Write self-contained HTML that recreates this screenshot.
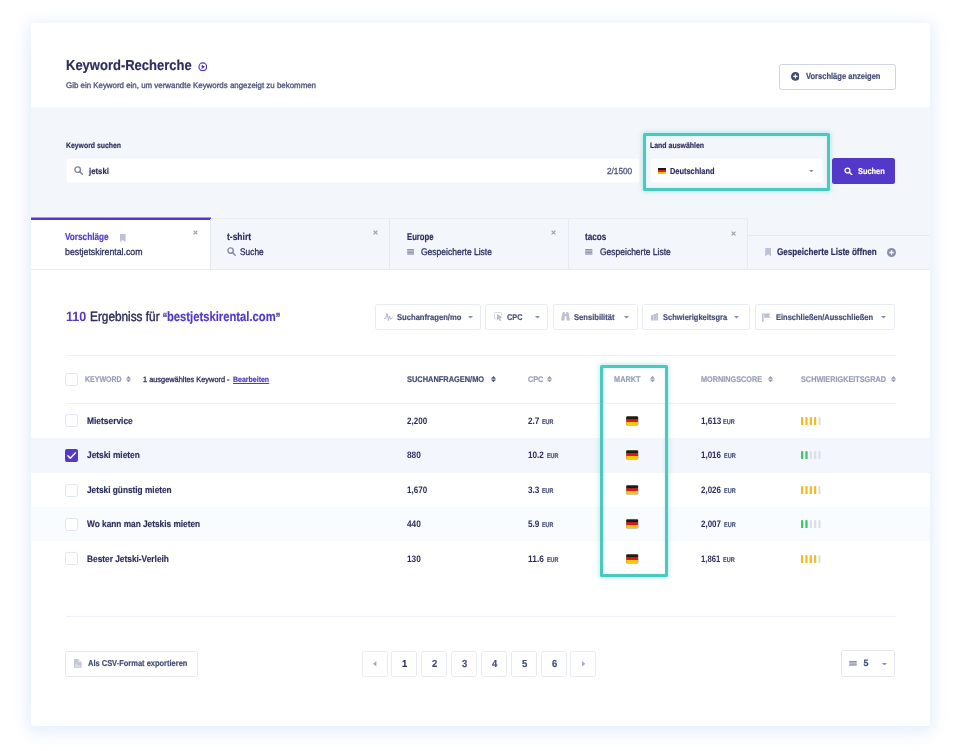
<!DOCTYPE html>
<html lang="de"><head><meta charset="utf-8"><title>Keyword-Recherche</title>
<style>
html,body{margin:0;padding:0;background:#fff;}
body{width:960px;height:751px;position:relative;overflow:hidden;font-family:"Liberation Sans",Arial,sans-serif;}
.b{position:absolute;display:block;}
.t{position:absolute;display:block;white-space:nowrap;transform-origin:0 50%;text-rendering:geometricPrecision;}
#w{position:absolute;left:0;top:0;width:960px;height:751px;will-change:transform;}
</style></head><body><div id="w">
<div class="b" style="left:31px;top:23px;width:899px;height:703px;background:#fff;border-radius:3px;box-shadow:0 2px 9px 5px rgba(185,212,252,.17), 0 5px 22px 1px rgba(185,212,252,.24);"></div>
<div class="b" style="left:31px;top:107px;width:899px;height:162.5px;background:#f3f6fb;"></div>
<div class="b" style="left:31px;top:218px;width:717px;height:1px;background:#e9edf6;"></div>
<div class="b" style="left:31px;top:269px;width:899px;height:1px;background:#e6eaf4;"></div>
<div class="b" style="left:31px;top:220px;width:179.5px;height:49px;background:#fff;"></div>
<div class="b" style="left:31px;top:218px;width:180px;height:2px;background:#5338c9;"></div>
<div class="b" style="left:31px;top:217px;width:180px;height:1px;background:#5338c9;opacity:.5;"></div>
<div class="b" style="left:210.0px;top:219px;width:1px;height:50px;background:#e6eaf4;"></div>
<div class="b" style="left:389.0px;top:219px;width:1px;height:50px;background:#e6eaf4;"></div>
<div class="b" style="left:568.0px;top:219px;width:1px;height:50px;background:#e6eaf4;"></div>
<div class="b" style="left:747.0px;top:219px;width:1px;height:50px;background:#e6eaf4;"></div>
<div class="b" style="left:747.5px;top:234.5px;width:182.5px;height:1px;background:#e6eaf4;"></div>
<span class="t" style="left:65.50px;top:59.00px;font-size:14.5px;line-height:14.5px;color:#2b2e5c;font-weight:700;-webkit-text-stroke:0.18px #2b2e5c;transform:scaleX(0.8965);">Keyword-Recherche</span>
<svg class="b" style="left:197.8px;top:61.6px" width="9.6" height="9.6" viewBox="0 0 24 24"><circle cx="12" cy="12" r="9.6" fill="none" stroke="#5338c9" stroke-width="3"/><path d="M9.2 6.6 L17.6 12 L9.2 17.4Z" fill="#4a2fc4"/></svg>
<span class="t" style="left:65.60px;top:82.00px;font-size:8.2px;line-height:8.2px;color:#4a5079;-webkit-text-stroke:0.3px #4a5079;transform:scaleX(0.9655);">Gib ein Keyword ein, um verwandte Keywords angezeigt zu bekommen</span>
<div class="b" style="left:779px;top:64px;width:116.5px;height:25.5px;border:1px solid #cfd4e3;border-radius:2.5px;box-sizing:border-box;background:#fff;"></div>
<svg class="b" style="left:790.6px;top:72.4px" width="8.8" height="8.8" viewBox="0 0 24 24"><circle cx="12" cy="12" r="12" fill="#3f4a70"/><path d="M12 6v12M6 12h12" stroke="#fff" stroke-width="3.4"/></svg>
<span class="t" style="left:805.80px;top:72.00px;font-size:8.8px;line-height:8.8px;color:#424c73;font-weight:700;-webkit-text-stroke:0.18px #424c73;transform:scaleX(0.8574);">Vorschläge anzeigen</span>
<span class="t" style="left:65.70px;top:142.00px;font-size:8px;line-height:8px;color:#2b2e5c;font-weight:700;-webkit-text-stroke:0.18px #2b2e5c;transform:scaleX(0.8599);">Keyword suchen</span>
<div class="b" style="left:66px;top:158px;width:574px;height:25px;background:#fff;border:1px solid #f6f8fc;border-radius:2.5px;box-sizing:border-box;"></div>
<svg class="b" style="left:74.4px;top:166px" width="9.1" height="9.1" viewBox="0 0 24 24"><circle cx="9.6" cy="9.6" r="7.3" fill="none" stroke="#7d849f" stroke-width="3.6"/><path d="M15.2 15.2 L22 22" stroke="#7d849f" stroke-width="4" stroke-linecap="round"/></svg>
<span class="t" style="left:89.10px;top:167.00px;font-size:8.6px;line-height:8.6px;color:#2b2e5c;font-weight:700;-webkit-text-stroke:0.18px #2b2e5c;transform:scaleX(0.9049);">jetski</span>
<span class="t" style="left:606.80px;top:167.00px;font-size:8.7px;line-height:8.7px;color:#4a5579;-webkit-text-stroke:0.3px #4a5579;transform:scaleX(0.9470);">2/1500</span>
<div class="b" style="left:643px;top:133px;width:187px;height:58px;border:3px solid #4ac9bf;border-radius:1.5px;box-sizing:border-box;box-shadow:0 0 4px 1px rgba(74,201,191,.35), inset 0 0 3px rgba(74,201,191,.25);"></div>
<span class="t" style="left:649.60px;top:142.00px;font-size:8px;line-height:8px;color:#2b2e5c;font-weight:700;-webkit-text-stroke:0.18px #2b2e5c;transform:scaleX(0.8693);">Land auswählen</span>
<div class="b" style="left:650px;top:158px;width:173px;height:25px;background:#fff;border:1px solid #f6f8fc;border-radius:2.5px;box-sizing:border-box;"></div>
<svg class="b" style="left:658px;top:168px" width="8" height="6" viewBox="0 0 9 6" preserveAspectRatio="none"><rect width="9" height="2" fill="#1a1a1a"/><rect y="2" width="9" height="2" fill="#dd1f26"/><rect y="4" width="9" height="2" fill="#f7c600"/></svg>
<span class="t" style="left:669.80px;top:167.00px;font-size:8.7px;line-height:8.7px;color:#2b2e5c;font-weight:700;-webkit-text-stroke:0.18px #2b2e5c;transform:scaleX(0.8523);">Deutschland</span>
<svg class="b" style="left:809.4px;top:170px" width="4.6" height="2.4" viewBox="0 0 10 5"><path d="M0 0h10L5 5z" fill="#8a90a8"/></svg>
<div class="b" style="left:832px;top:158px;width:63.3px;height:25.7px;background:#5338c9;border-radius:2.5px;"></div>
<svg class="b" style="left:844.4px;top:166.6px" width="8.8" height="8.8" viewBox="0 0 24 24"><circle cx="9.5" cy="9.5" r="6.6" fill="none" stroke="#fff" stroke-width="3.6"/><path d="M14.6 14.6 L22 22" stroke="#fff" stroke-width="3.8" stroke-linecap="round"/></svg>
<span class="t" style="left:857.50px;top:167.00px;font-size:8.5px;line-height:8.5px;color:#fff;font-weight:700;-webkit-text-stroke:0.18px #fff;transform:scaleX(0.8697);">Suchen</span>
<span class="t" style="left:65.30px;top:233.00px;font-size:9.9px;line-height:9.9px;color:#5338c9;font-weight:700;-webkit-text-stroke:0.18px #5338c9;transform:scaleX(0.8302);">Vorschläge</span>
<svg class="b" style="left:120px;top:233.7px" width="5.6" height="8" viewBox="0 0 10 14"><path d="M0 0h10v14l-5-3.6L0 14z" fill="#bcc1d3"/></svg>
<span class="t" style="left:65.40px;top:248.00px;font-size:9.6px;line-height:9.6px;color:#2b2e5c;-webkit-text-stroke:0.3px #2b2e5c;transform:scaleX(0.9147);">bestjetskirental.com</span>
<svg class="b" style="left:193px;top:230.3px" width="5" height="5" viewBox="0 0 10 10"><path d="M1.2 1.2l7.6 7.6M8.8 1.2l-7.6 7.6" stroke="#9fa2aa" stroke-width="2.5"/></svg>
<span class="t" style="left:227.40px;top:233.00px;font-size:9.9px;line-height:9.9px;color:#2b2e5c;font-weight:700;-webkit-text-stroke:0.18px #2b2e5c;transform:scaleX(0.8593);">t-shirt</span>
<svg class="b" style="left:227.2px;top:247px" width="8.9" height="8.9" viewBox="0 0 24 24"><circle cx="9.6" cy="9.6" r="7.3" fill="none" stroke="#8389a5" stroke-width="3.7"/><path d="M15.2 15.2 L22 22" stroke="#8389a5" stroke-width="4" stroke-linecap="round"/></svg>
<span class="t" style="left:240.30px;top:248.00px;font-size:9.6px;line-height:9.6px;color:#2b2e5c;-webkit-text-stroke:0.3px #2b2e5c;transform:scaleX(0.8707);">Suche</span>
<svg class="b" style="left:372.5px;top:230.3px" width="5" height="5" viewBox="0 0 10 10"><path d="M1.2 1.2l7.6 7.6M8.8 1.2l-7.6 7.6" stroke="#9fa2aa" stroke-width="2.5"/></svg>
<span class="t" style="left:406.60px;top:233.00px;font-size:9.9px;line-height:9.9px;color:#2b2e5c;font-weight:700;-webkit-text-stroke:0.18px #2b2e5c;transform:scaleX(0.7814);">Europe</span>
<svg class="b" style="left:406.5px;top:249.1px" width="7.5" height="5.6" viewBox="0 0 14 11"><rect width="14" height="11" fill="#8e94ad" opacity=".35"/><path d="M0 1h14M0 4h14M0 7h14M0 10h14" stroke="#8e94ad" stroke-width="1.9"/></svg>
<span class="t" style="left:420.50px;top:248.00px;font-size:9.6px;line-height:9.6px;color:#2b2e5c;-webkit-text-stroke:0.3px #2b2e5c;transform:scaleX(0.8870);">Gespeicherte Liste</span>
<svg class="b" style="left:551.3px;top:230.3px" width="5" height="5" viewBox="0 0 10 10"><path d="M1.2 1.2l7.6 7.6M8.8 1.2l-7.6 7.6" stroke="#9fa2aa" stroke-width="2.5"/></svg>
<span class="t" style="left:585.30px;top:233.00px;font-size:9.9px;line-height:9.9px;color:#2b2e5c;font-weight:700;-webkit-text-stroke:0.18px #2b2e5c;transform:scaleX(0.8275);">tacos</span>
<svg class="b" style="left:585.3px;top:249.1px" width="7.5" height="5.6" viewBox="0 0 14 11"><rect width="14" height="11" fill="#8e94ad" opacity=".35"/><path d="M0 1h14M0 4h14M0 7h14M0 10h14" stroke="#8e94ad" stroke-width="1.9"/></svg>
<span class="t" style="left:599.80px;top:248.00px;font-size:9.6px;line-height:9.6px;color:#2b2e5c;-webkit-text-stroke:0.3px #2b2e5c;transform:scaleX(0.8845);">Gespeicherte Liste</span>
<svg class="b" style="left:730.6px;top:230.8px" width="5" height="5" viewBox="0 0 10 10"><path d="M1.2 1.2l7.6 7.6M8.8 1.2l-7.6 7.6" stroke="#9fa2aa" stroke-width="2.5"/></svg>
<svg class="b" style="left:764.5px;top:247.5px" width="6.4" height="8.4" viewBox="0 0 10 14"><path d="M0 0h10v14l-5-3.6L0 14z" fill="#bcc1d3"/></svg>
<span class="t" style="left:776.80px;top:248.00px;font-size:9.8px;line-height:9.8px;color:#2b2e5c;font-weight:700;-webkit-text-stroke:0.18px #2b2e5c;transform:scaleX(0.8284);">Gespeicherte Liste öffnen</span>
<svg class="b" style="left:887.2px;top:247.5px" width="9" height="9" viewBox="0 0 24 24"><circle cx="12" cy="12" r="12" fill="#8a90a8"/><path d="M12 6v12M6 12h12" stroke="#f3f6fc" stroke-width="3.4"/></svg>
<span class="t" style="left:66.00px;top:310.00px;font-size:13.4px;line-height:13.4px;color:#5338c9;font-weight:700;transform:scaleX(0.9390);">110</span>
<span class="t" style="left:89.60px;top:310.00px;font-size:13.4px;line-height:13.4px;color:#2b2e5c;-webkit-text-stroke:0.42px #2b2e5c;transform:scaleX(0.8822);">Ergebniss für</span>
<span class="t" style="left:162.60px;top:311.00px;font-size:17.5px;line-height:17.5px;color:#2b2e5c;-webkit-text-stroke:0.3px #2b2e5c;transform:scaleX(0.6864);">“</span>
<span class="t" style="left:166.80px;top:310.00px;font-size:13.4px;line-height:13.4px;color:#5338c9;font-weight:700;-webkit-text-stroke:0.18px #5338c9;transform:scaleX(0.8388);">bestjetskirental.com</span>
<span class="t" style="left:276.20px;top:311.00px;font-size:17.5px;line-height:17.5px;color:#2b2e5c;-webkit-text-stroke:0.3px #2b2e5c;transform:scaleX(0.6864);">”</span>
<div class="b" style="left:375px;top:304px;width:106px;height:26px;border:1px solid #e8ebf4;border-radius:2.5px;box-sizing:border-box;background:#fff;"></div>
<div class="b" style="left:485px;top:304px;width:63px;height:26px;border:1px solid #e8ebf4;border-radius:2.5px;box-sizing:border-box;background:#fff;"></div>
<div class="b" style="left:553px;top:304px;width:85px;height:26px;border:1px solid #e8ebf4;border-radius:2.5px;box-sizing:border-box;background:#fff;"></div>
<div class="b" style="left:642px;top:304px;width:108px;height:26px;border:1px solid #e8ebf4;border-radius:2.5px;box-sizing:border-box;background:#fff;"></div>
<div class="b" style="left:755px;top:304px;width:140px;height:26px;border:1px solid #e8ebf4;border-radius:2.5px;box-sizing:border-box;background:#fff;"></div>
<svg class="b" style="left:383.9px;top:313px" width="9" height="8" viewBox="0 0 9 8"><path d="M0 5.4L1.8 5.3L3.1 .4L4.4 7.4L5.6 3.1L6.7 6.3L8.9 4.4" fill="none" stroke="#adb2c8" stroke-width=".95" stroke-linejoin="round"/></svg>
<span class="t" style="left:396.70px;top:313.00px;font-size:8.4px;line-height:8.4px;color:#434c75;font-weight:700;-webkit-text-stroke:0.18px #434c75;transform:scaleX(0.9099);">Suchanfragen/mo</span>
<svg class="b" style="left:467.6px;top:316px" width="5" height="2.6" viewBox="0 0 10 5"><path d="M0 0h10L5 5z" fill="#8a90a8"/></svg>
<svg class="b" style="left:493.9px;top:312px" width="9" height="9.4" viewBox="0 0 9 9.4"><path d="M2.6 6.9H1.4Q.5 6.9 .5 6V1.4Q.5 .5 1.4 .5H6.7Q7.6 .5 7.6 1.4V3.3" fill="none" stroke="#d0d4e2" stroke-width=".95"/><path d="M3 2L8.4 5.3L6.2 6.1L7.3 8.6L5.9 9.1L4.8 6.8L3 8.2Z" fill="#b6bace"/></svg>
<span class="t" style="left:506.80px;top:313.00px;font-size:8.4px;line-height:8.4px;color:#434c75;font-weight:700;-webkit-text-stroke:0.18px #434c75;transform:scaleX(0.8740);">CPC</span>
<svg class="b" style="left:534.8px;top:316px" width="5" height="2.6" viewBox="0 0 10 5"><path d="M0 0h10L5 5z" fill="#8a90a8"/></svg>
<svg class="b" style="left:561.3px;top:312.4px" width="9" height="8.6" viewBox="0 0 9 8.6"><path d="M1.9 0H3.7L3.8 2.1H5.2L5.3 0H7.1L7.9 2.5L9 8.6H5.5V4.2H3.6V8.6H0L1.1 2.5Z" fill="#bcc0d2"/></svg>
<span class="t" style="left:573.80px;top:313.00px;font-size:8.4px;line-height:8.4px;color:#434c75;font-weight:700;-webkit-text-stroke:0.18px #434c75;transform:scaleX(0.9061);">Sensibilität</span>
<svg class="b" style="left:624px;top:316px" width="5" height="2.6" viewBox="0 0 10 5"><path d="M0 0h10L5 5z" fill="#8a90a8"/></svg>
<svg class="b" style="left:650.7px;top:313.1px" width="7.7" height="7.5" viewBox="0 0 7.7 7.5"><rect x="0" y="2.1" width="2.35" height="5.4" fill="#bcc0d2"/><rect x="2.6" y="1.05" width="2.35" height="6.45" fill="#bcc0d2"/><rect x="5.2" y="0" width="2.5" height="7.5" fill="#bcc0d2"/></svg>
<span class="t" style="left:662.50px;top:313.00px;font-size:8.4px;line-height:8.4px;color:#434c75;font-weight:700;-webkit-text-stroke:0.18px #434c75;transform:scaleX(0.8943);">Schwierigkeitsgra</span>
<svg class="b" style="left:734px;top:316px" width="5" height="2.6" viewBox="0 0 10 5"><path d="M0 0h10L5 5z" fill="#8a90a8"/></svg>
<svg class="b" style="left:762.2px;top:313.1px" width="8.8" height="8.8" viewBox="0 0 8.8 8.8"><rect x="0" y="0" width="1.6" height="8.7" rx=".5" fill="#bcc0d2"/><path d="M2.2 .4H8.6L6.9 2.55L8.6 4.7H2.2Z" fill="#bcc0d2"/></svg>
<span class="t" style="left:775.60px;top:313.00px;font-size:8.4px;line-height:8.4px;color:#434c75;font-weight:700;-webkit-text-stroke:0.18px #434c75;transform:scaleX(0.8946);">Einschließen/Ausschließen</span>
<svg class="b" style="left:881.3px;top:316px" width="5" height="2.6" viewBox="0 0 10 5"><path d="M0 0h10L5 5z" fill="#8a90a8"/></svg>
<div class="b" style="left:65.5px;top:355.3px;width:830px;height:1px;background:#eef0f7;"></div>
<div class="b" style="left:65.5px;top:403.2px;width:830px;height:1px;background:#eef0f7;"></div>
<div class="b" style="left:31px;top:438px;width:899px;height:34.5px;background:#f3f6fc;"></div>
<div class="b" style="left:31px;top:507px;width:899px;height:34px;background:#f9fcfe;"></div>
<div class="b" style="left:65.4px;top:373px;width:12.8px;height:12.8px;background:#fff;border:1px solid #e2e5f0;border-radius:2.5px;box-sizing:border-box;"></div>
<span class="t" style="left:84.60px;top:376.00px;font-size:8.2px;line-height:8.2px;color:#979db6;font-weight:700;-webkit-text-stroke:0.18px #979db6;transform:scaleX(0.8559);">KEYWORD</span>
<svg class="b" style="left:125.7px;top:376.1px" width="5" height="6.2" viewBox="0 0 10 12.4" preserveAspectRatio="none"><path d="M5 .5l4.3 4.5H.7zM5 11.9L.7 7.4h8.6z" fill="#8d93ad" stroke="#8d93ad" stroke-width=".7" stroke-linejoin="round"/></svg>
<span class="t" style="left:143.40px;top:376.00px;font-size:7.8px;line-height:7.8px;color:#2b2e5c;-webkit-text-stroke:0.3px #2b2e5c;transform:scaleX(0.9466);">1 ausgewähltes Keyword -</span>
<span class="t" style="left:233.10px;top:376.00px;font-size:7.8px;line-height:7.8px;color:#5338c9;font-weight:700;-webkit-text-stroke:0.18px #5338c9;transform:scaleX(0.8967);text-decoration:underline;">Bearbeiten</span>
<span class="t" style="left:406.50px;top:376.00px;font-size:8.2px;line-height:8.2px;color:#414a73;font-weight:700;-webkit-text-stroke:0.18px #414a73;transform:scaleX(0.9068);">SUCHANFRAGEN/MO</span>
<svg class="b" style="left:490.5px;top:376.1px" width="5" height="6.2" viewBox="0 0 10 12.4" preserveAspectRatio="none"><path d="M5 .5l4.3 4.5H.7zM5 11.9L.7 7.4h8.6z" fill="#414a73" stroke="#414a73" stroke-width=".7" stroke-linejoin="round"/></svg>
<span class="t" style="left:527.80px;top:376.00px;font-size:8.2px;line-height:8.2px;color:#979db6;font-weight:700;-webkit-text-stroke:0.18px #979db6;transform:scaleX(0.8780);">CPC</span>
<svg class="b" style="left:546.7px;top:376.1px" width="5" height="6.2" viewBox="0 0 10 12.4" preserveAspectRatio="none"><path d="M5 .5l4.3 4.5H.7zM5 11.9L.7 7.4h8.6z" fill="#8d93ad" stroke="#8d93ad" stroke-width=".7" stroke-linejoin="round"/></svg>
<span class="t" style="left:614.10px;top:376.00px;font-size:8.2px;line-height:8.2px;color:#979db6;font-weight:700;-webkit-text-stroke:0.18px #979db6;transform:scaleX(0.9002);">MARKT</span>
<svg class="b" style="left:650px;top:376.1px" width="5" height="6.2" viewBox="0 0 10 12.4" preserveAspectRatio="none"><path d="M5 .5l4.3 4.5H.7zM5 11.9L.7 7.4h8.6z" fill="#8d93ad" stroke="#8d93ad" stroke-width=".7" stroke-linejoin="round"/></svg>
<span class="t" style="left:701.30px;top:376.00px;font-size:8.2px;line-height:8.2px;color:#979db6;font-weight:700;-webkit-text-stroke:0.18px #979db6;transform:scaleX(0.8896);">MORNINGSCORE</span>
<svg class="b" style="left:768px;top:376.1px" width="5" height="6.2" viewBox="0 0 10 12.4" preserveAspectRatio="none"><path d="M5 .5l4.3 4.5H.7zM5 11.9L.7 7.4h8.6z" fill="#8d93ad" stroke="#8d93ad" stroke-width=".7" stroke-linejoin="round"/></svg>
<span class="t" style="left:801.00px;top:376.00px;font-size:8.2px;line-height:8.2px;color:#979db6;font-weight:700;-webkit-text-stroke:0.18px #979db6;transform:scaleX(0.8906);">SCHWIERIGKEITSGRAD</span>
<svg class="b" style="left:890.8px;top:376.1px" width="5" height="6.2" viewBox="0 0 10 12.4" preserveAspectRatio="none"><path d="M5 .5l4.3 4.5H.7zM5 11.9L.7 7.4h8.6z" fill="#8d93ad" stroke="#8d93ad" stroke-width=".7" stroke-linejoin="round"/></svg>
<div class="b" style="left:65.4px;top:414px;width:12.8px;height:12.8px;background:#fff;border:1px solid #e2e5f0;border-radius:2.5px;box-sizing:border-box;"></div>
<span class="t" style="left:86.60px;top:416.00px;font-size:9.4px;line-height:9.4px;color:#2b2e5c;font-weight:700;-webkit-text-stroke:0.18px #2b2e5c;transform:scaleX(0.8963);">Mietservice</span>
<span class="t" style="left:406.60px;top:416.00px;font-size:9.4px;line-height:9.4px;color:#2b2e5c;font-weight:700;transform:scaleX(0.8566);">2,200</span>
<span class="t" style="left:527.80px;top:416.00px;font-size:9.4px;line-height:9.4px;color:#2b2e5c;font-weight:700;transform:scaleX(0.8762);">2.7</span>
<span class="t" style="left:541.75px;top:420.00px;font-size:6.8px;line-height:6.8px;color:#414a73;font-weight:700;-webkit-text-stroke:0.18px #414a73;transform:scaleX(0.7940);">EUR</span>
<svg class="b" style="left:626.2px;top:416.4px" width="12.4" height="9.4" viewBox="0 0 12.4 9.4"><rect x="0" y="0" width="12.4" height="9.4" rx="1.5" fill="#7a6a45" opacity=".75"/><rect x=".45" y=".4" width="11.5" height="3" rx=".9" fill="#1b1b1b"/><rect x=".45" y="2.5" width="11.5" height="1" fill="#1b1b1b"/><rect x=".45" y="3.3" width="11.5" height="2.9" fill="#e0171d"/><rect x=".45" y="6.1" width="11.5" height="2.85" rx=".9" fill="#f8c800"/><rect x=".45" y="6.1" width="11.5" height="1.4" fill="#f8c800"/></svg>
<span class="t" style="left:701.30px;top:416.00px;font-size:9.4px;line-height:9.4px;color:#2b2e5c;font-weight:700;transform:scaleX(0.8694);">1,613</span>
<span class="t" style="left:722.50px;top:420.00px;font-size:6.8px;line-height:6.8px;color:#414a73;font-weight:700;-webkit-text-stroke:0.18px #414a73;transform:scaleX(0.8080);">EUR</span>
<svg class="b" style="left:801px;top:417.0px" width="20" height="8.4" viewBox="0 0 20 8.4"><rect x="0.00" y="0" width="2.3" height="8.4" rx="1" fill="#f4bb26"/><rect x="4.33" y="0" width="2.3" height="8.4" rx="1" fill="#f4bb26"/><rect x="8.66" y="0" width="2.3" height="8.4" rx="1" fill="#f4bb26"/><rect x="12.99" y="0" width="2.3" height="8.4" rx="1" fill="#f4bb26"/><rect x="17.32" y="0" width="2.3" height="8.4" rx="1" fill="#dcdfe9"/></svg>
<div class="b" style="left:65.4px;top:449px;width:13px;height:13px;background:#5338c9;border-radius:2px;"><svg width="13" height="13" viewBox="0 0 13 13" style="display:block"><path d="M2.9 6.8L5.3 9.3L10.5 3.7" fill="none" stroke="#fff" stroke-width="1.35" stroke-linecap="round" stroke-linejoin="round"/></svg></div>
<span class="t" style="left:86.60px;top:450.00px;font-size:9.4px;line-height:9.4px;color:#2b2e5c;font-weight:700;-webkit-text-stroke:0.18px #2b2e5c;transform:scaleX(0.8881);">Jetski mieten</span>
<span class="t" style="left:406.60px;top:450.00px;font-size:9.4px;line-height:9.4px;color:#2b2e5c;font-weight:700;transform:scaleX(0.8863);">880</span>
<span class="t" style="left:527.80px;top:450.00px;font-size:9.4px;line-height:9.4px;color:#2b2e5c;font-weight:700;transform:scaleX(0.8718);">10.2</span>
<span class="t" style="left:546.50px;top:454.00px;font-size:6.8px;line-height:6.8px;color:#414a73;font-weight:700;-webkit-text-stroke:0.18px #414a73;transform:scaleX(0.7940);">EUR</span>
<svg class="b" style="left:626.2px;top:450.4px" width="12.4" height="9.4" viewBox="0 0 12.4 9.4"><rect x="0" y="0" width="12.4" height="9.4" rx="1.5" fill="#7a6a45" opacity=".75"/><rect x=".45" y=".4" width="11.5" height="3" rx=".9" fill="#1b1b1b"/><rect x=".45" y="2.5" width="11.5" height="1" fill="#1b1b1b"/><rect x=".45" y="3.3" width="11.5" height="2.9" fill="#e0171d"/><rect x=".45" y="6.1" width="11.5" height="2.85" rx=".9" fill="#f8c800"/><rect x=".45" y="6.1" width="11.5" height="1.4" fill="#f8c800"/></svg>
<span class="t" style="left:701.30px;top:450.00px;font-size:9.4px;line-height:9.4px;color:#2b2e5c;font-weight:700;transform:scaleX(0.8481);">1,016</span>
<span class="t" style="left:724.25px;top:454.00px;font-size:6.8px;line-height:6.8px;color:#414a73;font-weight:700;-webkit-text-stroke:0.18px #414a73;transform:scaleX(0.8080);">EUR</span>
<svg class="b" style="left:801px;top:451.0px" width="20" height="8.4" viewBox="0 0 20 8.4"><rect x="0.00" y="0" width="2.3" height="8.4" rx="1" fill="#3fc66c"/><rect x="4.33" y="0" width="2.3" height="8.4" rx="1" fill="#3fc66c"/><rect x="8.66" y="0" width="2.3" height="8.4" rx="1" fill="#dcdfe9"/><rect x="12.99" y="0" width="2.3" height="8.4" rx="1" fill="#dcdfe9"/><rect x="17.32" y="0" width="2.3" height="8.4" rx="1" fill="#dcdfe9"/></svg>
<div class="b" style="left:65.4px;top:484px;width:12.8px;height:12.8px;background:#fff;border:1px solid #e2e5f0;border-radius:2.5px;box-sizing:border-box;"></div>
<span class="t" style="left:86.60px;top:485.00px;font-size:9.4px;line-height:9.4px;color:#2b2e5c;font-weight:700;-webkit-text-stroke:0.18px #2b2e5c;transform:scaleX(0.8833);">Jetski günstig mieten</span>
<span class="t" style="left:406.60px;top:485.00px;font-size:9.4px;line-height:9.4px;color:#2b2e5c;font-weight:700;transform:scaleX(0.8566);">1,670</span>
<span class="t" style="left:527.80px;top:485.00px;font-size:9.4px;line-height:9.4px;color:#2b2e5c;font-weight:700;transform:scaleX(0.8762);">3.3</span>
<span class="t" style="left:541.75px;top:489.00px;font-size:6.8px;line-height:6.8px;color:#414a73;font-weight:700;-webkit-text-stroke:0.18px #414a73;transform:scaleX(0.7940);">EUR</span>
<svg class="b" style="left:626.2px;top:485.4px" width="12.4" height="9.4" viewBox="0 0 12.4 9.4"><rect x="0" y="0" width="12.4" height="9.4" rx="1.5" fill="#7a6a45" opacity=".75"/><rect x=".45" y=".4" width="11.5" height="3" rx=".9" fill="#1b1b1b"/><rect x=".45" y="2.5" width="11.5" height="1" fill="#1b1b1b"/><rect x=".45" y="3.3" width="11.5" height="2.9" fill="#e0171d"/><rect x=".45" y="6.1" width="11.5" height="2.85" rx=".9" fill="#f8c800"/><rect x=".45" y="6.1" width="11.5" height="1.4" fill="#f8c800"/></svg>
<span class="t" style="left:701.30px;top:485.00px;font-size:9.4px;line-height:9.4px;color:#2b2e5c;font-weight:700;transform:scaleX(0.8481);">2,026</span>
<span class="t" style="left:724.25px;top:489.00px;font-size:6.8px;line-height:6.8px;color:#414a73;font-weight:700;-webkit-text-stroke:0.18px #414a73;transform:scaleX(0.8080);">EUR</span>
<svg class="b" style="left:801px;top:486.0px" width="20" height="8.4" viewBox="0 0 20 8.4"><rect x="0.00" y="0" width="2.3" height="8.4" rx="1" fill="#f4bb26"/><rect x="4.33" y="0" width="2.3" height="8.4" rx="1" fill="#f4bb26"/><rect x="8.66" y="0" width="2.3" height="8.4" rx="1" fill="#f4bb26"/><rect x="12.99" y="0" width="2.3" height="8.4" rx="1" fill="#f4bb26"/><rect x="17.32" y="0" width="2.3" height="8.4" rx="1" fill="#dcdfe9"/></svg>
<div class="b" style="left:65.4px;top:518px;width:12.8px;height:12.8px;background:#fff;border:1px solid #e2e5f0;border-radius:2.5px;box-sizing:border-box;"></div>
<span class="t" style="left:86.60px;top:519.00px;font-size:9.4px;line-height:9.4px;color:#2b2e5c;font-weight:700;-webkit-text-stroke:0.18px #2b2e5c;transform:scaleX(0.8836);">Wo kann man Jetskis mieten</span>
<span class="t" style="left:406.60px;top:519.00px;font-size:9.4px;line-height:9.4px;color:#2b2e5c;font-weight:700;transform:scaleX(0.8863);">440</span>
<span class="t" style="left:527.80px;top:519.00px;font-size:9.4px;line-height:9.4px;color:#2b2e5c;font-weight:700;transform:scaleX(0.8762);">5.9</span>
<span class="t" style="left:541.75px;top:523.00px;font-size:6.8px;line-height:6.8px;color:#414a73;font-weight:700;-webkit-text-stroke:0.18px #414a73;transform:scaleX(0.7940);">EUR</span>
<svg class="b" style="left:626.2px;top:519.4px" width="12.4" height="9.4" viewBox="0 0 12.4 9.4"><rect x="0" y="0" width="12.4" height="9.4" rx="1.5" fill="#7a6a45" opacity=".75"/><rect x=".45" y=".4" width="11.5" height="3" rx=".9" fill="#1b1b1b"/><rect x=".45" y="2.5" width="11.5" height="1" fill="#1b1b1b"/><rect x=".45" y="3.3" width="11.5" height="2.9" fill="#e0171d"/><rect x=".45" y="6.1" width="11.5" height="2.85" rx=".9" fill="#f8c800"/><rect x=".45" y="6.1" width="11.5" height="1.4" fill="#f8c800"/></svg>
<span class="t" style="left:701.30px;top:519.00px;font-size:9.4px;line-height:9.4px;color:#2b2e5c;font-weight:700;transform:scaleX(0.8481);">2,007</span>
<span class="t" style="left:724.25px;top:523.00px;font-size:6.8px;line-height:6.8px;color:#414a73;font-weight:700;-webkit-text-stroke:0.18px #414a73;transform:scaleX(0.8080);">EUR</span>
<svg class="b" style="left:801px;top:520.0px" width="20" height="8.4" viewBox="0 0 20 8.4"><rect x="0.00" y="0" width="2.3" height="8.4" rx="1" fill="#3fc66c"/><rect x="4.33" y="0" width="2.3" height="8.4" rx="1" fill="#3fc66c"/><rect x="8.66" y="0" width="2.3" height="8.4" rx="1" fill="#dcdfe9"/><rect x="12.99" y="0" width="2.3" height="8.4" rx="1" fill="#dcdfe9"/><rect x="17.32" y="0" width="2.3" height="8.4" rx="1" fill="#dcdfe9"/></svg>
<div class="b" style="left:65.4px;top:552px;width:12.8px;height:12.8px;background:#fff;border:1px solid #e2e5f0;border-radius:2.5px;box-sizing:border-box;"></div>
<span class="t" style="left:86.60px;top:554.00px;font-size:9.4px;line-height:9.4px;color:#2b2e5c;font-weight:700;-webkit-text-stroke:0.18px #2b2e5c;transform:scaleX(0.8882);">Bester Jetski-Verleih</span>
<span class="t" style="left:406.60px;top:554.00px;font-size:9.4px;line-height:9.4px;color:#2b2e5c;font-weight:700;transform:scaleX(0.8863);">130</span>
<span class="t" style="left:527.80px;top:554.00px;font-size:9.4px;line-height:9.4px;color:#2b2e5c;font-weight:700;transform:scaleX(0.8972);">11.6</span>
<span class="t" style="left:546.50px;top:558.00px;font-size:6.8px;line-height:6.8px;color:#414a73;font-weight:700;-webkit-text-stroke:0.18px #414a73;transform:scaleX(0.7940);">EUR</span>
<svg class="b" style="left:626.2px;top:554.4px" width="12.4" height="9.4" viewBox="0 0 12.4 9.4"><rect x="0" y="0" width="12.4" height="9.4" rx="1.5" fill="#7a6a45" opacity=".75"/><rect x=".45" y=".4" width="11.5" height="3" rx=".9" fill="#1b1b1b"/><rect x=".45" y="2.5" width="11.5" height="1" fill="#1b1b1b"/><rect x=".45" y="3.3" width="11.5" height="2.9" fill="#e0171d"/><rect x=".45" y="6.1" width="11.5" height="2.85" rx=".9" fill="#f8c800"/><rect x=".45" y="6.1" width="11.5" height="1.4" fill="#f8c800"/></svg>
<span class="t" style="left:701.30px;top:554.00px;font-size:9.4px;line-height:9.4px;color:#2b2e5c;font-weight:700;transform:scaleX(0.8162);">1,861</span>
<span class="t" style="left:722.75px;top:558.00px;font-size:6.8px;line-height:6.8px;color:#414a73;font-weight:700;-webkit-text-stroke:0.18px #414a73;transform:scaleX(0.8080);">EUR</span>
<svg class="b" style="left:801px;top:555.0px" width="20" height="8.4" viewBox="0 0 20 8.4"><rect x="0.00" y="0" width="2.3" height="8.4" rx="1" fill="#f4bb26"/><rect x="4.33" y="0" width="2.3" height="8.4" rx="1" fill="#f4bb26"/><rect x="8.66" y="0" width="2.3" height="8.4" rx="1" fill="#f4bb26"/><rect x="12.99" y="0" width="2.3" height="8.4" rx="1" fill="#f4bb26"/><rect x="17.32" y="0" width="2.3" height="8.4" rx="1" fill="#dcdfe9"/></svg>
<div class="b" style="left:600px;top:364.5px;width:68px;height:212px;border:3px solid #4ac9bf;border-radius:1.5px;box-sizing:border-box;box-shadow:0 0 4px 1px rgba(74,201,191,.35), inset 0 0 3px rgba(74,201,191,.25);"></div>
<div class="b" style="left:65.5px;top:616px;width:830px;height:1px;background:#eef0f7;"></div>
<div class="b" style="left:65px;top:651px;width:133px;height:26px;border:1px solid #e5e8f2;border-radius:2.5px;box-sizing:border-box;background:#fff;"></div>
<svg class="b" style="left:74px;top:659.1px" width="7.6" height="8.8" viewBox="0 0 14 16" preserveAspectRatio="none"><path d="M0 0h8l6 6v10H0z" fill="#c3c7d6"/><path d="M8 0v6h6" fill="#e4e6ee"/><path d="M4 9v5M7 10.5V14M10 12v2" stroke="#fff" stroke-width="1.3"/></svg>
<span class="t" style="left:87.80px;top:659.00px;font-size:8.6px;line-height:8.6px;color:#434c75;font-weight:700;-webkit-text-stroke:0.18px #434c75;transform:scaleX(0.8707);">Als CSV-Format exportieren</span>
<div class="b" style="left:362px;top:651px;width:26px;height:26px;border:1px solid #e8eaf4;border-radius:2.5px;box-sizing:border-box;background:#fff;"></div>
<svg class="b" style="left:373.4px;top:661.2px" width="3.4" height="5.4" viewBox="0 0 6 10" preserveAspectRatio="none"><path d="M6 0v10L0 5z" fill="#a3a8bd"/></svg>
<div class="b" style="left:391px;top:651px;width:26px;height:26px;border:1px solid #e8eaf4;border-radius:2.5px;box-sizing:border-box;background:#fff;"></div>
<span class="t" style="left:401.96px;top:660.00px;font-size:10.2px;line-height:10.2px;color:#2b2e5c;font-weight:700;-webkit-text-stroke:0.18px #2b2e5c;transform:scaleX(0.9300);">1</span>
<div class="b" style="left:421px;top:651px;width:26px;height:26px;border:1px solid #e8eaf4;border-radius:2.5px;box-sizing:border-box;background:#fff;"></div>
<span class="t" style="left:431.96px;top:660.00px;font-size:10.2px;line-height:10.2px;color:#434c75;font-weight:700;-webkit-text-stroke:0.18px #434c75;transform:scaleX(0.9300);">2</span>
<div class="b" style="left:451px;top:651px;width:26px;height:26px;border:1px solid #e8eaf4;border-radius:2.5px;box-sizing:border-box;background:#fff;"></div>
<span class="t" style="left:461.96px;top:660.00px;font-size:10.2px;line-height:10.2px;color:#434c75;font-weight:700;-webkit-text-stroke:0.18px #434c75;transform:scaleX(0.9300);">3</span>
<div class="b" style="left:481px;top:651px;width:26px;height:26px;border:1px solid #e8eaf4;border-radius:2.5px;box-sizing:border-box;background:#fff;"></div>
<span class="t" style="left:491.96px;top:660.00px;font-size:10.2px;line-height:10.2px;color:#434c75;font-weight:700;-webkit-text-stroke:0.18px #434c75;transform:scaleX(0.9300);">4</span>
<div class="b" style="left:511px;top:651px;width:26px;height:26px;border:1px solid #e8eaf4;border-radius:2.5px;box-sizing:border-box;background:#fff;"></div>
<span class="t" style="left:521.96px;top:660.00px;font-size:10.2px;line-height:10.2px;color:#434c75;font-weight:700;-webkit-text-stroke:0.18px #434c75;transform:scaleX(0.9300);">5</span>
<div class="b" style="left:541px;top:651px;width:26px;height:26px;border:1px solid #e8eaf4;border-radius:2.5px;box-sizing:border-box;background:#fff;"></div>
<span class="t" style="left:551.96px;top:660.00px;font-size:10.2px;line-height:10.2px;color:#434c75;font-weight:700;-webkit-text-stroke:0.18px #434c75;transform:scaleX(0.9300);">6</span>
<div class="b" style="left:570px;top:651px;width:26px;height:26px;border:1px solid #e8eaf4;border-radius:2.5px;box-sizing:border-box;background:#fff;"></div>
<svg class="b" style="left:582px;top:661.2px" width="3.4" height="5.4" viewBox="0 0 6 10" preserveAspectRatio="none"><path d="M0 0v10l6-5z" fill="#a3a8bd"/></svg>
<div class="b" style="left:841px;top:650px;width:54px;height:27px;border:1px solid #e5e8f2;border-radius:2.5px;box-sizing:border-box;background:#fff;"></div>
<svg class="b" style="left:849.3px;top:660.7px" width="8" height="5.8" viewBox="0 0 14 11"><rect width="14" height="11" fill="#8e94ad" opacity=".35"/><path d="M0 1h14M0 4h14M0 7h14M0 10h14" stroke="#8e94ad" stroke-width="1.9"/></svg>
<span class="t" style="left:863.50px;top:659.00px;font-size:9px;line-height:9px;color:#434c75;font-weight:700;-webkit-text-stroke:0.18px #434c75;">5</span>
<svg class="b" style="left:882px;top:662.5px" width="4.8" height="2.6" viewBox="0 0 10 5"><path d="M0 0h10L5 5z" fill="#8a90a8"/></svg>
</div></body></html>
